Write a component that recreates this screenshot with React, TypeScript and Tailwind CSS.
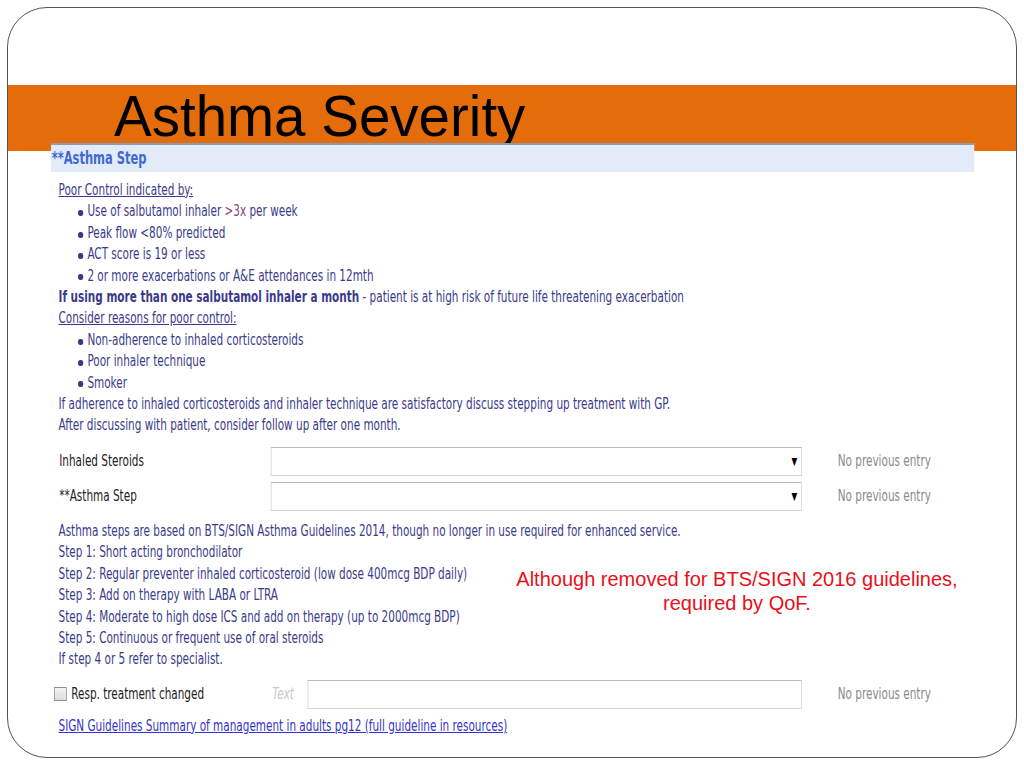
import React from 'react';

// The form is a horizontally squeezed screenshot, so it is laid out at full width and scaled on x.
const formFont = { fontFamily: '"DejaVu Sans Condensed", "DejaVu Sans", Verdana, sans-serif' };

const Bullet = ({ children }: { children: React.ReactNode }) => (
  <div className="flex items-center pl-[26px]">
    <span className="w-[6.5px] h-[6px] rounded-full bg-[#3a3a8c] mr-[6px] mt-[2px]" />
    <span>{children}</span>
  </div>
);

const SelectRow = ({ label }: { label: string }) => (
  <div className="flex items-center h-[35px]">
    <div className="w-[293px] pl-[11px] text-[#222]">{label}</div>
    <div className="w-[708px] h-[29px] border border-[#d4d4d4] border-t-[#bdbdbd] bg-white flex items-center justify-end pr-[5px] text-[11px] text-black">
      ▼
    </div>
    <div className="ml-[48px] text-[#8a8a8a]">No previous entry</div>
  </div>
);

export default function App() {
  return (
    <div className="w-[1024px] h-[768px] bg-white p-[7px]" style={{ fontFamily: '"Liberation Sans", Arial, sans-serif' }}>
      <div className="h-[751px] w-[1010px] border border-[#555] rounded-[40px] overflow-hidden">
        <div className="h-[77px]" />
        <div className="h-[66px] bg-[#e46c0a] pl-[106px]">
          <h1 className="text-[56.5px] leading-[64px] text-black">Asthma Severity</h1>
        </div>
        <div className="relative -mt-[8px] ml-[43px] w-[923px]">
          <div className="w-[1231px] origin-left scale-x-75 text-[15.5px] leading-[21.4px]" style={formFont}>
            <div className="h-[29px] bg-[#e3eaf8] border-t-2 border-[#8c9bb4] flex items-center pl-[1px] text-[#3f6ad0] font-bold text-[17px]">
              **Asthma Step
            </div>
            <div className="pl-[10px] pt-[8px] text-[#3a3a8c]">
              <div className="underline">Poor Control indicated by:</div>
              <Bullet>Use of salbutamol inhaler <span className="text-[#8a3a8c]">&gt;3x</span> per week</Bullet>
              <Bullet>Peak flow &lt;80% predicted</Bullet>
              <Bullet>ACT score is 19 or less</Bullet>
              <Bullet>2 or more exacerbations or A&amp;E attendances in 12mth</Bullet>
              <div>
                <span className="font-bold">If using more than one salbutamol inhaler a month</span> - patient is at high risk of future life threatening exacerbation
              </div>
              <div className="underline">Consider reasons for poor control:</div>
              <Bullet>Non-adherence to inhaled corticosteroids</Bullet>
              <Bullet>Poor inhaler technique</Bullet>
              <Bullet>Smoker</Bullet>
              <div>If adherence to inhaled corticosteroids and inhaler technique are satisfactory discuss stepping up treatment with GP.</div>
              <div>After discussing with patient, consider follow up after one month.</div>
            </div>
            <div className="pt-[7px]">
              <SelectRow label="Inhaled Steroids" />
              <SelectRow label="**Asthma Step" />
            </div>
            <div className="pl-[10px] pt-[7px] text-[#3a3a8c]">
              <div>Asthma steps are based on BTS/SIGN Asthma Guidelines 2014, though no longer in use required for enhanced service.</div>
              <div>Step 1: Short acting bronchodilator</div>
              <div>Step 2: Regular preventer inhaled corticosteroid (low dose 400mcg BDP daily)</div>
              <div>Step 3: Add on therapy with LABA or LTRA</div>
              <div>Step 4: Moderate to high dose ICS and add on therapy (up to 2000mcg BDP)</div>
              <div>Step 5: Continuous or frequent use of oral steroids</div>
              <div>If step 4 or 5 refer to specialist.</div>
            </div>
            <div className="flex items-center h-[35px] mt-[6px]">
              <div className="w-[295px] flex items-center pl-[4px] text-[#222]">
                <span className="w-[17px] h-[14px] border border-[#8f8f8f] bg-gradient-to-b from-[#f4f4f4] to-[#dcdcdc] mr-[6px]" />
                Resp. treatment changed
              </div>
              <div className="w-[47px] italic text-[#c8c8c8]">Text</div>
              <div className="w-[659px] h-[29px] border border-[#d4d4d4] border-t-[#bdbdbd] bg-white" />
              <div className="ml-[48px] text-[#8a8a8a]">No previous entry</div>
            </div>
            <div className="pl-[10px] pt-[4px]">
              <span className="underline text-[#3333cc]">SIGN Guidelines Summary of management in adults pg12 (full guideline in resources)</span>
            </div>
          </div>
          {/* slide annotation laid over the screenshot */}
          <div className="absolute left-[446px] top-[424px] w-[480px] whitespace-nowrap text-center text-[20px] leading-[24px] text-[#e8101a]">
            Although removed for BTS/SIGN 2016 guidelines,<br />required by QoF.
          </div>
        </div>
      </div>
    </div>
  );
}
